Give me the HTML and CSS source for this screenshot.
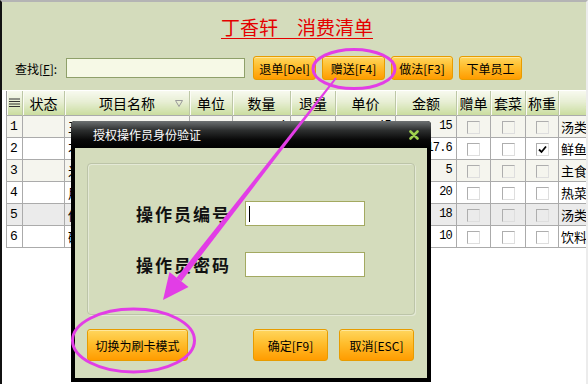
FILE: index.html
```html
<!DOCTYPE html>
<html>
<head>
	<title>丁香轩 消费清单</title>
	<link rel="stylesheet" href="styles.css">
</head>
<body>
	<div class="window">
		<div class="top">
			<h1 class="title"><span>丁香轩　消费清单</span></h1>
			<div class="toolbar">
				<label class="find-label">查找[<u>F</u>]:</label>
				<div class="search"></div>
				<button class="btn tb-btn">退单[Del]</button>
				<button class="btn tb-btn">赠送[F4]</button>
				<button class="btn tb-btn narrow">做法[F3]</button>
				<button class="btn tb-btn">下单员工</button>
			</div>
		</div>

		<div class="grid">
			<table>
				<colgroup>
					<col style="width:16px"><col style="width:42px"><col style="width:125px"><col style="width:43px">
					<col style="width:58px"><col style="width:45px"><col style="width:60px"><col style="width:61px">
					<col style="width:34px"><col style="width:35px"><col style="width:33px"><col style="width:82px">
				</colgroup>
				<thead>
					<tr>
						<th class="idx-head">
							<svg width="11" height="10" viewBox="0 0 11 10"><path d="M0 1h11M0 3.5h11M0 6h11M0 8.5h11" stroke="#333" stroke-width="1"/></svg>
						</th>
						<th>状态</th>
						<th class="name-head">项目名称<svg class="filter" width="8" height="7" viewBox="0 0 8 7"><path d="M0.5 0.5h7l-3.5 6z" fill="none" stroke="#999"/></svg></th>
						<th>单位</th>
						<th>数量</th>
						<th>退量</th>
						<th>单价</th>
						<th>金额</th>
						<th>赠单</th>
						<th>套菜</th>
						<th>称重</th>
						<th>类别</th>
					</tr>
				</thead>
				<tbody>
					<tr class="odd">
						<td class="num">1</td><td></td><td>玉米浓汤</td><td>份</td><td class="val">1</td><td></td><td class="val">15</td><td class="val">15</td>
						<td class="chk"><span class="cb"></span></td><td class="chk"><span class="cb"></span></td><td class="chk"><span class="cb"></span></td><td class="cat">汤类：汤</td>
					</tr>
					<tr>
						<td class="num">2</td><td></td><td>不辣鲜鱼</td><td>斤</td><td class="val">2.2</td><td></td><td class="val">8</td><td class="val">17.6</td>
						<td class="chk"><span class="cb"></span></td><td class="chk"><span class="cb"></span></td>
						<td class="chk"><span class="cb"><svg width="11" height="11" viewBox="0 0 11 11"><path d="M2 5.5l2.5 2.5 4.5-5.5" fill="none" stroke="#000" stroke-width="1.8"/></svg></span></td>
						<td class="cat">鲜鱼：鱼</td>
					</tr>
					<tr class="odd">
						<td class="num">3</td><td></td><td>米饭</td><td>碗</td><td class="val">5</td><td></td><td class="val">1</td><td class="val">5</td>
						<td class="chk"><span class="cb"></span></td><td class="chk"><span class="cb"></span></td><td class="chk"><span class="cb"></span></td><td class="cat">主食：饭</td>
					</tr>
					<tr>
						<td class="num">4</td><td></td><td>用心小炒</td><td>份</td><td class="val">1</td><td></td><td class="val">20</td><td class="val">20</td>
						<td class="chk"><span class="cb"></span></td><td class="chk"><span class="cb"></span></td><td class="chk"><span class="cb"></span></td><td class="cat">热菜：炒</td>
					</tr>
					<tr class="sel">
						<td class="num">5</td><td></td><td>佛跳墙</td><td>份</td><td class="val">1</td><td></td><td class="val">18</td><td class="val">18</td>
						<td class="chk"><span class="cb"></span></td><td class="chk"><span class="cb"></span></td><td class="chk"><span class="cb"></span></td><td class="cat">汤类：汤</td>
					</tr>
					<tr>
						<td class="num">6</td><td></td><td>碳酸饮料</td><td>瓶</td><td class="val">2</td><td></td><td class="val">5</td><td class="val">10</td>
						<td class="chk"><span class="cb"></span></td><td class="chk"><span class="cb"></span></td><td class="chk"><span class="cb"></span></td><td class="cat">饮料：水</td>
					</tr>
				</tbody>
			</table>
		</div>

		<!-- modal -->
		<div class="dialog">
			<div class="dlg-title">
				<span>授权操作员身份验证</span>
				<svg width="10" height="10" viewBox="0 0 10 10"><path d="M1.5 1.5l7 7M8.5 1.5l-7 7" stroke="#9fd04e" stroke-width="2.6" stroke-linecap="round"/></svg>
			</div>
			<div class="dlg-body">
				<div class="panel">
					<div class="field">
						<label>操作员编号</label>
						<div class="inp"><i class="caret"></i></div>
					</div>
					<div class="field">
						<label>操作员密码</label>
						<div class="inp"></div>
					</div>
				</div>
				<div class="dlg-foot">
					<button class="btn big">切换为刷卡模式</button>
					<button class="btn mid push">确定[F9]</button>
					<button class="btn mid">取消[ESC]</button>
				</div>
			</div>
		</div>

		<!-- hand drawn marks -->
		<svg class="marks" width="588" height="384" viewBox="0 0 588 384">
			<ellipse cx="354" cy="69" rx="41" ry="19.5" fill="none" stroke="#e23de6" stroke-width="3"/>
			<polygon points="336.8,78.6 335.2,77.4 176.6,277.7 181.4,281.3" fill="#e23de6"/>
			<polygon points="163,300 188.5,286.9 169.5,272.1" fill="#e23de6"/>
			<ellipse cx="133.5" cy="340.5" rx="61" ry="31.5" fill="none" stroke="#e23de6" stroke-width="3"/>
		</svg>
	</div>
</body>
</html>
```

FILE: styles.css
```css
* {
	box-sizing: border-box;
}
body {
	margin: 0;
	font-family: "Noto Sans CJK SC", sans-serif;
	font-size: 12px;
	color: #000;
}
.window {
	position: relative;
	width: 588px;
	height: 384px;
	overflow: hidden;
	background-color: #fff;
	border-top: 2px solid #b4b4b4;
	border-left: 2px solid #111;
	border-right: 2px solid #ececec;
}
.top {
	height: 88px;
	background-color: #d4dcbc;
}
.title {
	margin: 0;
	padding: 13px 0 0 6px;
	text-align: center;
	font-size: 19px;
	font-weight: normal;
	line-height: 24px;
	color: #e40000;
}
.title span {
	text-decoration: underline;
	text-underline-offset: 3px;
}
.toolbar {
	display: flex;
	align-items: center;
	gap: 6px;
	margin-top: 17px;
	padding-left: 13px;
}
.find-label {
	width: 51px;
	margin-right: -6px;
	white-space: nowrap;
}
.search {
	width: 179px;
	height: 20px;
	margin-right: 2px;
	background-color: #f6f9e6;
	border: 1px solid #8fa06a;
}
.btn {
	padding: 0;
	font-family: "Noto Sans CJK SC", sans-serif;
	font-size: 12px;
	color: #000;
	border: 1px solid #e79c00;
	border-radius: 3px;
	background: linear-gradient(#ffd65e, #ffbd2c 45%, #ff9c00);
	box-shadow: inset 0 1px 0 #ffe79a;
}
.tb-btn {
	width: 63px;
	height: 24px;
}
.tb-btn.narrow {
	width: 62px;
}
.grid {
	height: 294px;
	padding: 1px 0 0 4px;
	background-color: #fff;
}
table {
	width: 634px;
	table-layout: fixed;
	border-collapse: collapse;
	border-left: 1px solid #9a9a9a;
}
th {
	position: relative;
	height: 24px;
	padding: 0;
	font-size: 14px;
	font-weight: normal;
	white-space: nowrap;
	overflow: hidden;
	border-right: 1px solid #bdc7a6;
	background: linear-gradient(#f7f9ef, #e7eed4 45%, #cadd9f);
	box-shadow: inset 1px 0 0 #fbfcf5;
}
.idx-head svg {
	display: block;
	margin: 0 auto;
}
.filter {
	position: absolute;
	right: 6px;
	top: 9px;
}
td {
	height: 22px;
	padding: 0 3px;
	font-size: 13px;
	white-space: nowrap;
	overflow: hidden;
	border: 1px solid #ababab;
}
tr.odd td {
	background-color: #f5f5ee;
}
tr.sel td {
	background-color: #ebebeb;
}
.num {
	padding-left: 3px;
	font-family: "Liberation Mono", monospace;
}
.val {
	text-align: right;
	font-family: "Liberation Mono", monospace;
	font-size: 12px;
	letter-spacing: -0.8px;
	padding-right: 4px;
}
.chk {
	text-align: center;
	padding: 0;
}
.cb {
	display: inline-block;
	width: 13px;
	height: 13px;
	vertical-align: middle;
	border: 1px solid #aeaeae;
	border-right-color: #dedede;
	border-bottom-color: #dedede;
}
.cb svg {
	display: block;
}
.cat {
	padding-left: 2px;
}
.dialog {
	position: absolute;
	left: 69px;
	top: 119px;
	width: 360px;
	background-color: #000;
	border-radius: 4px 4px 0 0;
}
.dlg-title {
	display: flex;
	align-items: center;
	justify-content: space-between;
	height: 27px;
	padding: 0 12px 0 22px;
	color: #fff;
	font-size: 12px;
	border-radius: 4px 4px 0 0;
	background: linear-gradient(#6e7273, #2c2e2e 35%, #080808 70%, #000);
}
.dlg-body {
	margin: 0 4px 4px;
	padding: 15px 12px 17px;
	background-color: #d4dcbc;
}
.panel {
	display: flex;
	flex-direction: column;
	justify-content: center;
	align-items: center;
	gap: 26px;
	height: 152px;
	border: 1px solid #bcc4a8;
	border-radius: 4px;
	box-shadow: inset 1px 1px 0 #e4e9d6, 1px 1px 0 #e4e9d6;
}
.field {
	display: flex;
	align-items: center;
	padding-right: 1px;
}
.field label {
	width: 109px;
	font-size: 17px;
	font-weight: bold;
	letter-spacing: 2px;
	color: #111;
}
.inp {
	position: relative;
	width: 120px;
	height: 25px;
	background-color: #fff;
	border: 1px solid #a3a961;
}
.caret {
	position: absolute;
	left: 3px;
	top: 4px;
	width: 1px;
	height: 16px;
	background-color: #000;
}
.dlg-foot {
	display: flex;
	gap: 11px;
	margin-top: 14px;
	padding-right: 1px;
}
.btn.big {
	width: 101px;
	height: 32px;
}
.btn.mid {
	width: 75px;
	height: 32px;
}
.push {
	margin-left: auto;
}
.marks {
	position: absolute;
	left: -2px;
	top: -2px;
	pointer-events: none;
}
```
